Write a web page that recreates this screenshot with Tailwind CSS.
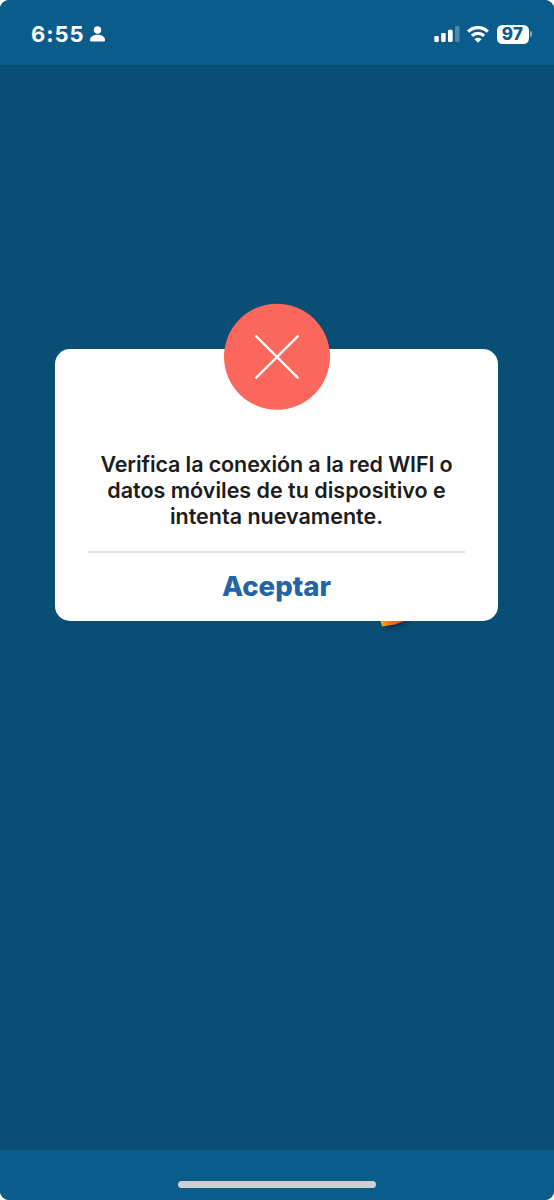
<!DOCTYPE html>
<html lang="es">
<head>
<meta charset="utf-8">
<title>Sin conexión</title>
<script src="https://cdn.jsdelivr.net/npm/@tailwindcss/browser@4"></script>
</head>
<body class="bg-white font-['Inter','Liberation_Sans',sans-serif]">
<div class="w-[554px] h-[1200px] rounded-[9px] overflow-hidden flex flex-col bg-[#084e75]">
  <header class="h-[65px] shrink-0 bg-[#0a5c8a] flex justify-between pl-[31px] pr-[22px] pt-[23px] text-white">
    <div class="flex h-[22px] items-center">
      <span class="w-[54px] text-[22px] leading-[22px] font-bold tracking-[0.900px] whitespace-nowrap">6:55</span>
      <svg class="ml-[5px]" width="15" height="16" viewBox="0 0 15 16" fill="#fff"><circle cx="7.500" cy="4" r="3.700"/><path d="M0 14c0-3.200 3.200-5.300 7.500-5.300S15 10.800 15 14c0 1.100-.6 1.600-1.700 1.600H1.700C.6 15.600 0 15.100 0 14z"/></svg>
    </div>
    <div class="flex h-[22px] items-center">
      <svg width="26" height="16" viewBox="0 0 26 16" fill="#fff"><rect x="0.300" y="10" width="4.500" height="6" rx="1.300"/><rect x="7.200" y="7" width="4.500" height="9" rx="1.300"/><rect x="14" y="3.800" width="4.700" height="12.200" rx="1.300"/><rect x="21" y="0" width="4.500" height="16" rx="1.300" opacity=".27"/></svg>
      <svg class="ml-[7px]" width="22" height="17" viewBox="0 0 22 17" fill="none" stroke="#fff" stroke-width="3.300"><path d="M1.200 5.600A14 14 0 0 1 20.800 5.600"/><path d="M4.900 9.900A8.700 8.700 0 0 1 17.100 9.900"/><path d="M11 16.800L7.400 13.200A5.200 5.200 0 0 1 14.600 13.200Z" fill="#fff" stroke="none"/></svg>
      <div class="ml-[8px] w-[32px] h-[19px] rounded-[5.500px] bg-white text-[#0a5c8a] text-[17px] leading-[19px] font-extrabold tracking-[0.300px] text-center">97</div>
      <div class="ml-[1.500px] w-[2px] h-[6px] rounded-r-full bg-white/50"></div>
    </div>
  </header>
  <main class="flex-1 flex flex-col items-center pt-[284px] pr-px">
    <section class="relative w-[443px] h-[272px] shrink-0 rounded-[15px] bg-white px-[33px] pt-[102px] flex flex-col">
      <svg class="absolute left-[168px] top-[-46px]" width="107" height="107" viewBox="0 0 107 107"><circle cx="54" cy="53.700" r="53" fill="#fb675c"/><path d="M33.300 33.300L74.700 74.700M74.700 33.300L33.300 74.700" stroke="#fff" stroke-width="2.400" stroke-linecap="round"/></svg>
      <div class="text-[#1c1c1e] text-[21.500px] leading-[26px] font-[560] tracking-[-0.100px] text-center whitespace-nowrap">
        <p>Verifica la conexión a la red WIFI o</p>
        <p class="tracking-[0px]">datos móviles de tu dispositivo e</p>
        <p class="tracking-[0px]">intenta nuevamente.</p>
      </div>
      <div class="mt-[22px] h-[2px] bg-[#dfdfdf]"></div>
      <button class="h-[70px] text-[#2463a8] text-[27.500px] font-extrabold">Aceptar</button>
      <svg class="absolute left-[319px] top-[272px] overflow-visible" width="50" height="14" viewBox="0 0 50 14"><defs><linearGradient id="g"><stop offset="0" stop-color="#e8b32c"/><stop offset=".3" stop-color="#ef7a1c"/><stop offset="1" stop-color="#dd4b14"/></linearGradient><filter id="s" x="-30%" y="-60%" width="160%" height="280%"><feGaussianBlur stdDeviation="2"/></filter><clipPath id="c"><rect x="0" y="0" width="60" height="20"/></clipPath></defs><g clip-path="url(#c)"><path d="M8 -4H38Q30 6 12 8Z" fill="#032c45" filter="url(#s)" opacity=".85"/><path d="M6.500 0H31Q22 4 8 5.500Z" fill="url(#g)"/></g></svg>
    </section>
  </main>
  <footer class="h-[50px] shrink-0 bg-[#0a5c8a] flex justify-center pt-[31px]">
    <div class="w-[198px] h-[7px] rounded-full bg-[#cfd1d1]"></div>
  </footer>
</div>
</body>
</html>
